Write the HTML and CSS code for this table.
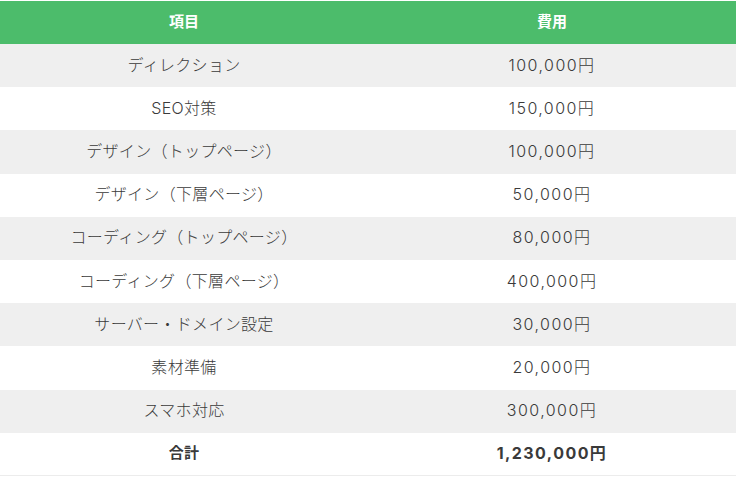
FILE: index.html
```html
<!DOCTYPE html>
<html lang="ja">
<head>
<meta charset="utf-8">
<link rel="stylesheet" href="styles.css">
</head>
<body>
<table class="price">
  <thead>
    <tr><th>項目</th><th>費用</th></tr>
  </thead>
  <tbody>
    <tr class="odd"><td>ディレクション</td><td class="cost">100,000円</td></tr>
    <tr><td>SEO対策</td><td class="cost">150,000円</td></tr>
    <tr class="odd"><td>デザイン（トップページ）</td><td class="cost">100,000円</td></tr>
    <tr><td>デザイン（下層ページ）</td><td class="cost">50,000円</td></tr>
    <tr class="odd"><td>コーディング（トップページ）</td><td class="cost">80,000円</td></tr>
    <tr><td>コーディング（下層ページ）</td><td class="cost">400,000円</td></tr>
    <tr class="odd"><td>サーバー・ドメイン設定</td><td class="cost">30,000円</td></tr>
    <tr><td>素材準備</td><td class="cost">20,000円</td></tr>
    <tr class="odd"><td>スマホ対応</td><td class="cost">300,000円</td></tr>
    <tr class="total"><td>合計</td><td class="cost">1,230,000円</td></tr>
  </tbody>
</table>
</body>
</html>
```
FILE: styles.css
```css
html, body {
  margin: 0;
  padding: 0;
  background: #fff;
}
body {
  padding-top: 1px;
  font-family: "Inter", "Noto Sans CJK JP", "Noto Sans", sans-serif;
  color: #3a3a3a;
}
.price {
  width: 736px;
  border-collapse: collapse;
  table-layout: fixed;
}
.price thead tr {
  height: 43px;
}
.price tbody tr {
  height: 43.2px;
}
.price tbody tr.total {
  height: 43px;
}
.price th {
  background: #4cbc6b;
  color: #fff;
  font-weight: bold;
  font-size: 15px;
  line-height: 20px;
  padding: 0 0 2px;
  text-align: center;
  vertical-align: middle;
}
.price td {
  padding: 0 0 2px;
  line-height: 20px;
  text-align: center;
  vertical-align: middle;
  font-size: 16px;
  font-weight: 300;
  letter-spacing: 0.02em;
}
.price td.cost {
  letter-spacing: 0.09em;
}
.price tr.odd td {
  background: #efefef;
}
.price tr.total td {
  font-weight: bold;
  border-bottom: 1px solid #ececec;
}
.price tr.total td:first-child {
  font-size: 15px;
}
```
